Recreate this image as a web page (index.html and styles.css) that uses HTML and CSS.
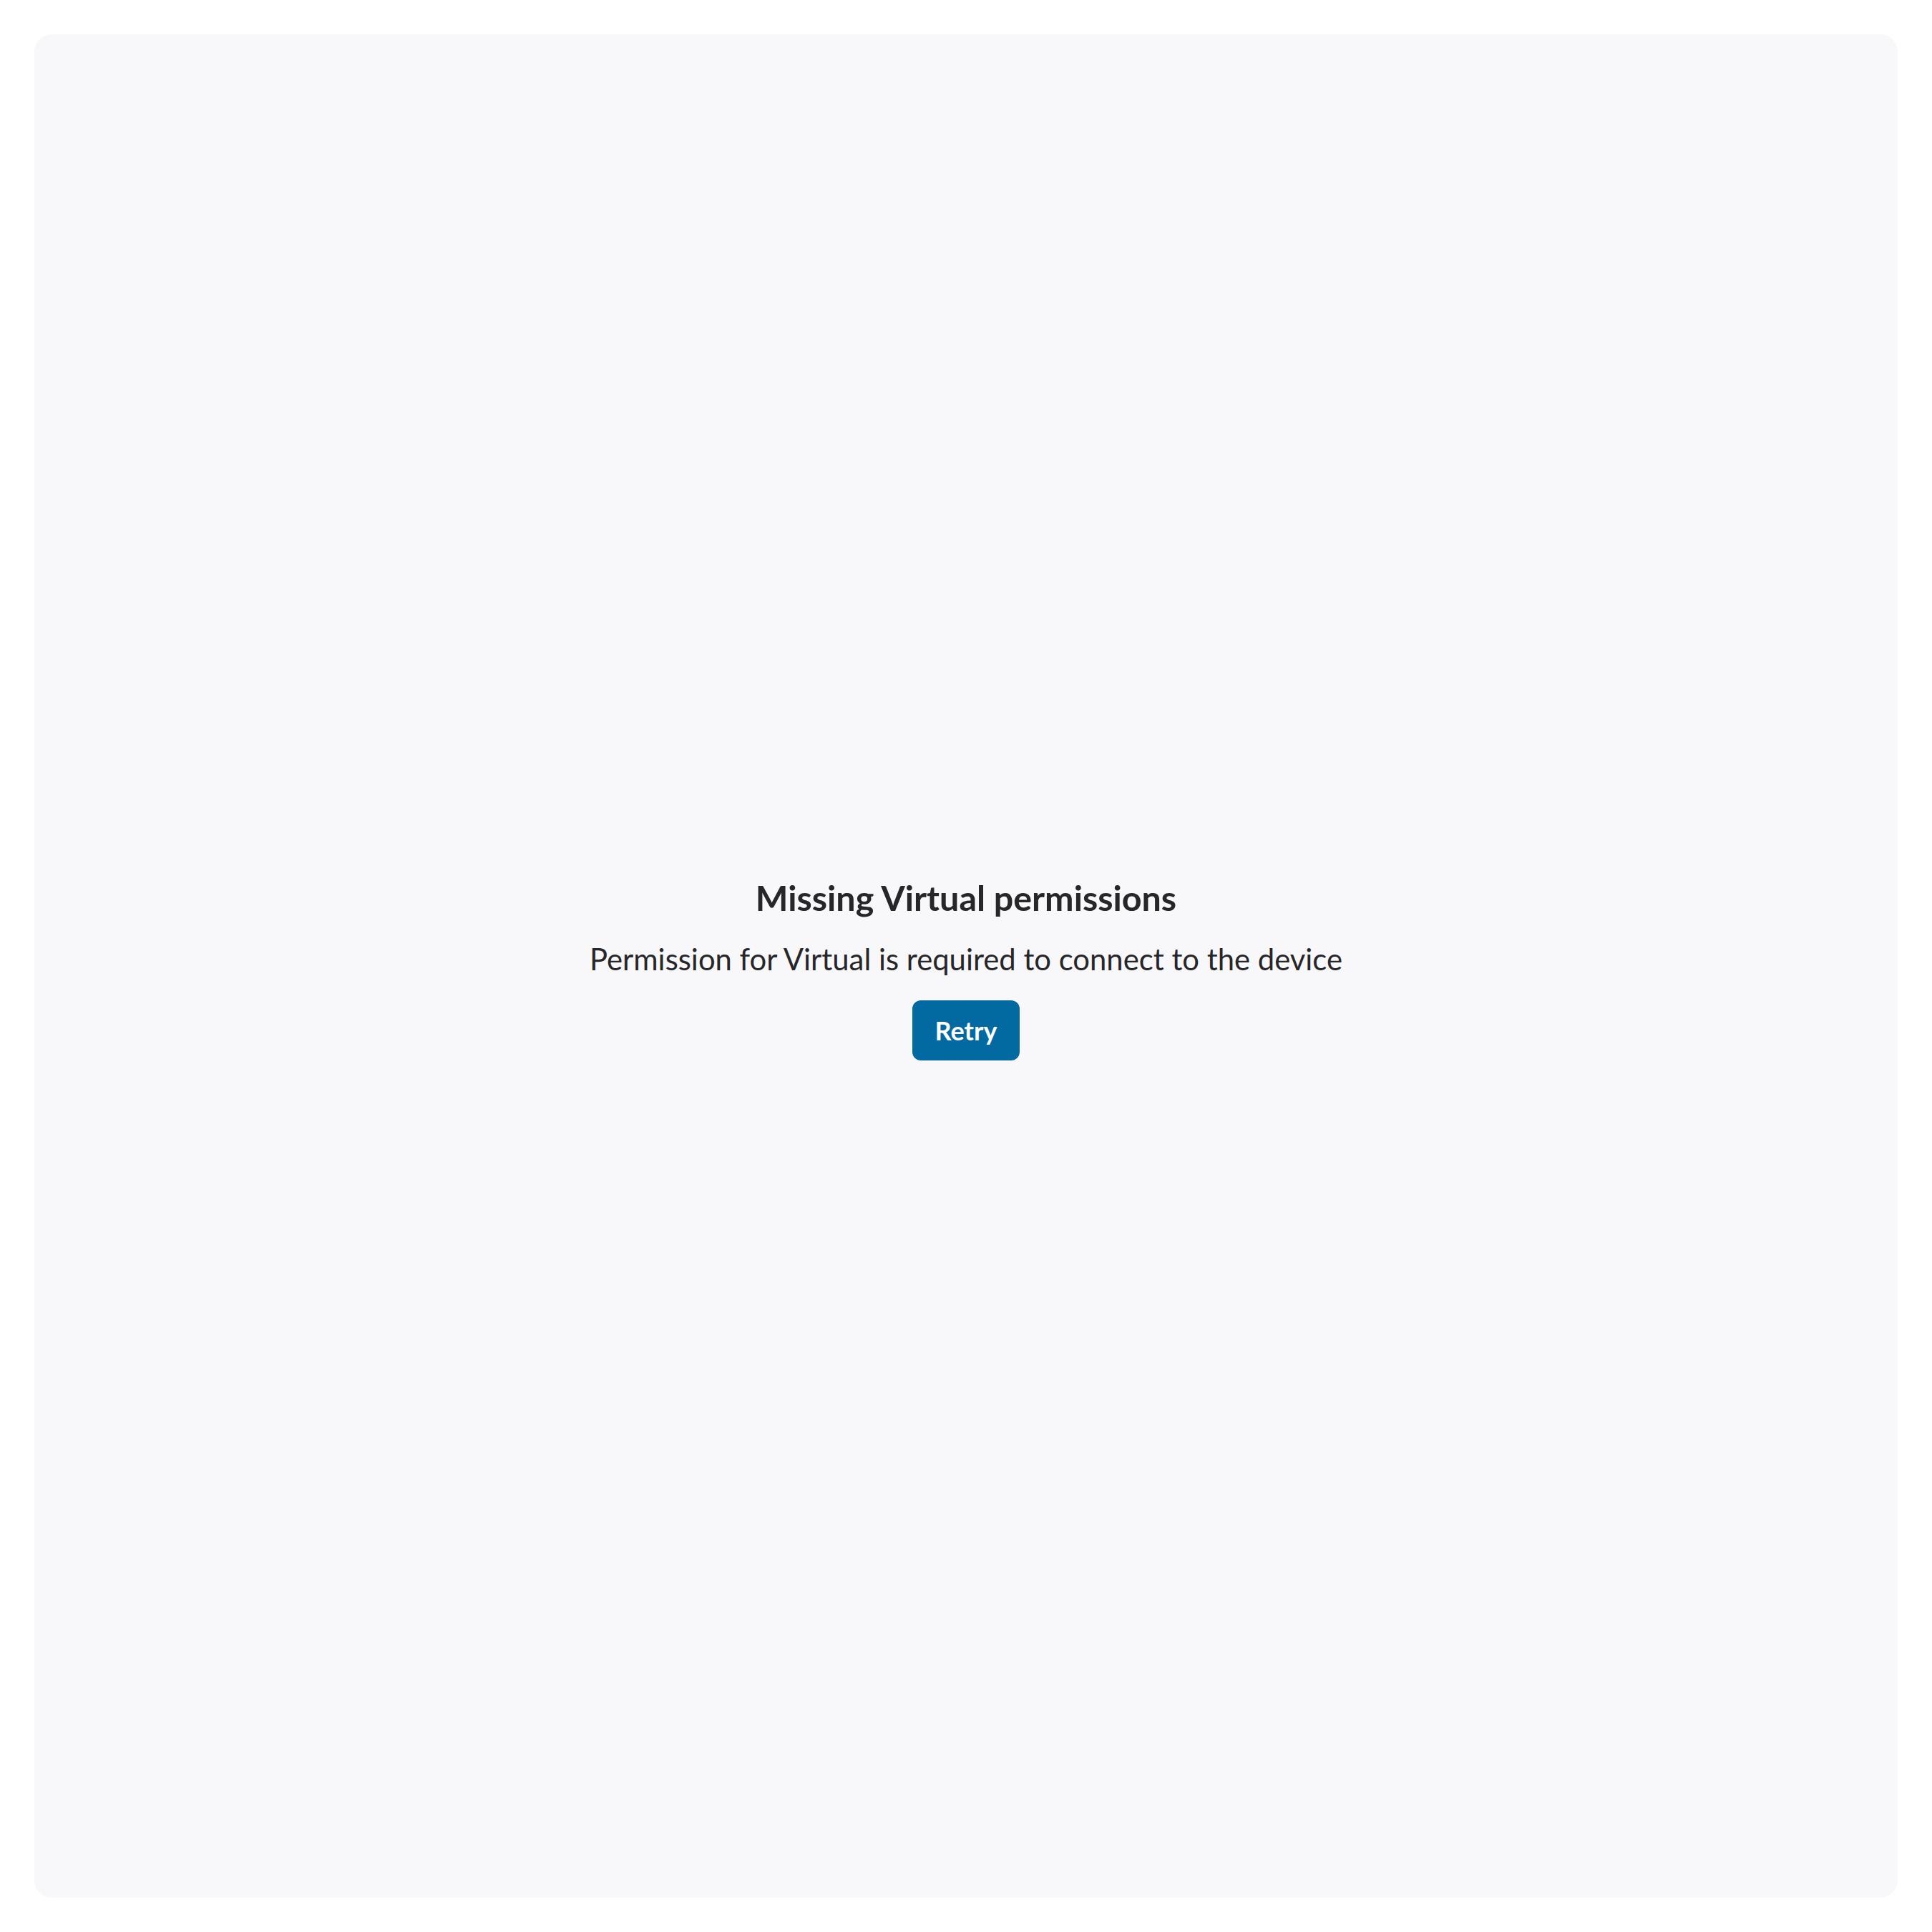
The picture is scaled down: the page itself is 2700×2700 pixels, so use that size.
FILE: index.html
```html
<!DOCTYPE html>
<html lang="en">
<head>
<meta charset="utf-8">
<title>Missing Virtual permissions</title>
<link rel="stylesheet" href="styles.css">
</head>
<body>
<main class="card">
  <section class="message">
    <h1 class="title">Missing Virtual permissions</h1>
    <p class="subtitle">Permission for Virtual is required to connect to the device</p>
    <button class="retry" type="button">Retry</button>
  </section>
</main>
</body>
</html>
```
FILE: styles.css
```css
* { box-sizing: border-box; }
html, body {
  margin: 0;
  padding: 0;
  background: #ffffff;
}
body {
  height: 100vh;
  padding: 48px;
  font-family: Lato, "Noto Sans", sans-serif;
  color: #27272a;
}
.card {
  height: 100%;
  background: #f8f8fa;
  border-radius: 24px;
  display: flex;
  align-items: center;
  justify-content: center;
}
.message {
  display: flex;
  flex-direction: column;
  align-items: center;
  text-align: center;
}
.title {
  margin: 0 0 20px;
  font-size: 48.4px;
  line-height: 72px;
  font-weight: 700;
}
.subtitle {
  margin: 0 0 28px;
  font-size: 41.8px;
  line-height: 60px;
  font-weight: 400;
}
.retry {
  border: 0;
  border-radius: 12px;
  background: #0369a1;
  color: #ffffff;
  font-family: Lato, "Noto Sans", sans-serif;
  font-size: 36px;
  line-height: 56px;
  font-weight: 700;
  padding: 14px 32px;
  cursor: pointer;
}
```
